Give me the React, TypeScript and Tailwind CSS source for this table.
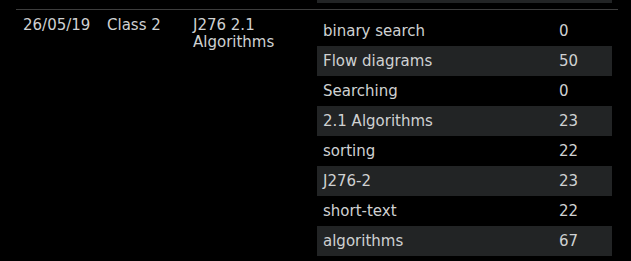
import React from "react";

const rows: [string, string][] = [
  ["binary search", "0"],
  ["Flow diagrams", "50"],
  ["Searching", "0"],
  ["2.1 Algorithms", "23"],
  ["sorting", "22"],
  ["J276-2", "23"],
  ["short-text", "22"],
  ["algorithms", "67"],
];

export default function App() {
  return (
    <div className="bg-black w-[631px] h-[261px] overflow-hidden font-['DejaVu_Sans','Verdana',sans-serif] text-[15px] text-[#cfd1d2]">
      <div className="ml-[16px] w-[602px]">
        <div className="h-[9px] flex">
          <div className="w-[301px]" />
          <div className="w-[295px] h-[3px] bg-[#222425]" />
        </div>
        <div className="border-t border-[#3d3d3d] flex">
          <div className="w-[84px] pl-[7px] pt-[7px] leading-[17px]">26/05/19</div>
          <div className="w-[86px] pl-[7px] pt-[7px] leading-[17px]">Class 2</div>
          <div className="w-[124px] pl-[7px] pt-[7px] pr-[7px] leading-[17px]">J276 2.1 Algorithms</div>
          <div className="pl-[7px] pt-[6px] w-[308px] pr-[6px]">
            <div className="w-[295px]">
              {rows.map(([name, n], i) => (
                <div
                  key={name}
                  className={`flex h-[30px] pt-[7px] leading-[17px] ${i % 2 === 1 ? "bg-[#222425]" : ""}`}
                >
                  <div className="w-[236px] pl-[6px]">{name}</div>
                  <div className="pl-[6px]">{n}</div>
                </div>
              ))}
            </div>
          </div>
        </div>
      </div>
    </div>
  );
}
